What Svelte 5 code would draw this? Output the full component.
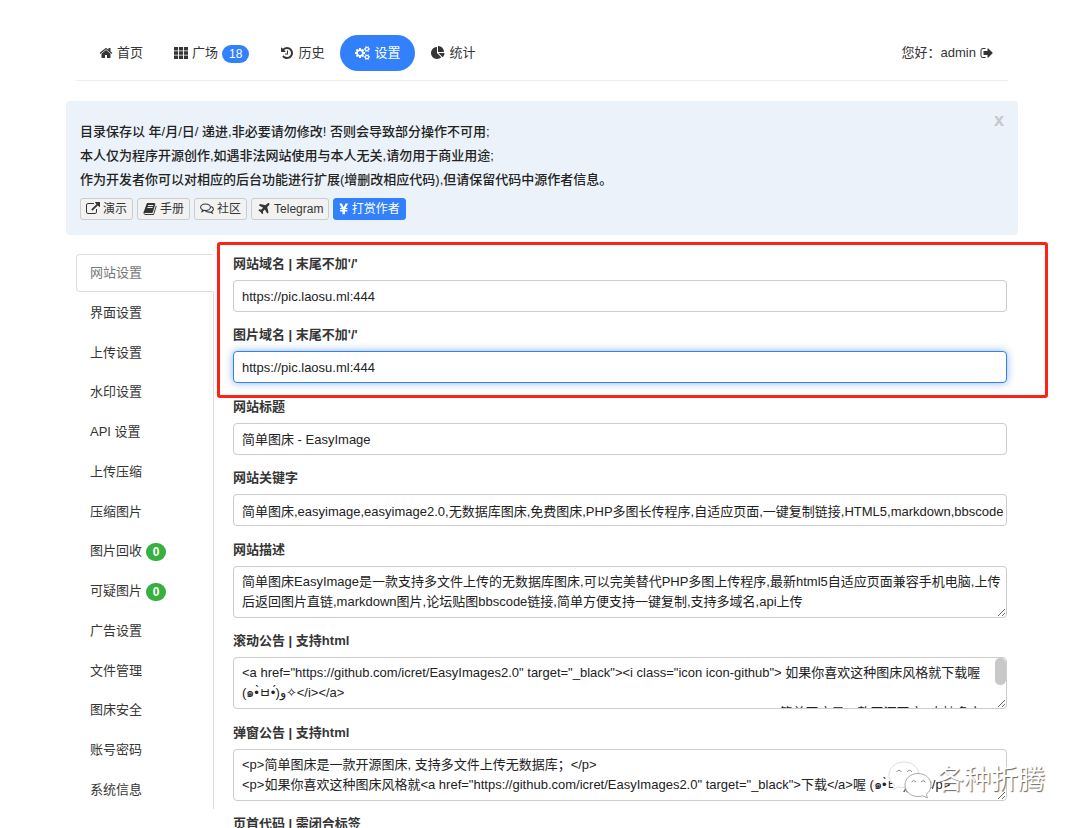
<script>
  const icons = {
    home: { w: 1792, d: 'M1472 992v480q0 26-19 45t-45 19h-384v-384h-256v384h-384q-26 0-45-19t-19-45v-480q0-1 .5-3t.5-3l575-474 575 474q1 2 1 6zm223-69l-62 74q-8 9-21 11h-3q-13 0-21-7l-692-577-692 577q-12 8-24 7-13-2-21-11l-62-74q-8-10-7-23.5t11-21.5l719-599q32-26 76-26t76 26l244 204v-195q0-14 9-23t23-9h192q14 0 23 9t9 23v408l219 182q10 8 11 21.5t-7 23.5z' },
    grid: { w: 1792, d: 'M0 140h520v430H0zM636 140h520v430H636zM1272 140h520v430h-520zM0 680h520v430H0zM636 680h520v430H636zM1272 680h520v430h-520zM0 1220h520v430H0zM636 1220h520v430H636zM1272 1220h520v430h-520z' },
    history: { w: 1792, d: 'M1664 896q0 156-61 298t-164 245-245 164-298 61q-172 0-327-72.5t-264-204.5q-7-10-6.5-22.5t8.5-20.5l137-138q10-9 25-9 16 2 23 12 73 95 179 147t225 52q104 0 198.5-40.5t163.5-109.5 109.5-163.5 40.5-198.5-40.5-198.5-109.5-163.5-163.5-109.5-198.5-40.5q-98 0-188 35.5t-160 101.5l137 138q31 30 14 69-17 40-59 40h-448q-26 0-45-19t-19-45v-448q0-42 40-59 39-17 69 14l130 129q107-101 244.5-156.5t284.5-55.5q156 0 298 61t245 164 164 245 61 298zm-640-288v448q0 14-9 23t-23 9h-320q-14 0-23-9t-9-23v-64q0-14 9-23t23-9h224v-352q0-14 9-23t23-9h64q14 0 23 9t9 23z' },
    cogs: { w: 1920, d: 'M896 896q0-106-75-181t-181-75-181 75-75 181 75 181 181 75 181-75 75-181zm768 512q0-52-38-90t-90-38-90 38-38 90q0 53 37.5 90.5t90.5 37.5 90.5-37.5 37.5-90.5zm0-1024q0-52-38-90t-90-38-90 38-38 90q0 53 37.5 90.5t90.5 37.5 90.5-37.5 37.5-90.5zm-384 421v185q0 10-7 19.5t-16 10.5l-155 24q-11 35-32 76 34 48 90 115 7 11 7 20 0 12-7 19-23 30-82.5 89.5t-78.5 59.5q-11 0-21-7l-115-90q-37 19-77 31-11 108-23 155-7 24-30 24h-186q-11 0-20-7.5t-10-17.5l-23-153q-34-10-75-31l-118 89q-7 7-20 7-11 0-21-8-144-133-144-160 0-9 7-19 10-14 41-53t47-61q-23-44-35-82l-152-24q-10-1-17-9.5t-7-19.5v-185q0-10 7-19.5t16-10.5l155-24q11-35 32-76-34-48-90-115-7-11-7-20 0-12 7-20 22-30 82-89t79-59q11 0 21 7l115 90q34-18 77-32 11-108 23-154 7-24 30-24h186q11 0 20 7.5t10 17.5l23 153q34 10 75 31l118-89q8-7 20-7 11 0 21 8 144 133 144 160 0 8-7 19-12 16-42 54t-45 60q23 48 34 82l152 23q10 2 17 10.5t7 19.5zm640 533v140q0 16-149 31-12 27-30 52 51 113 51 138 0 4-4 7-122 71-124 71-8 0-46-47t-52-68q-20 2-30 2t-30-2q-14 21-52 68t-46 47q-2 0-124-71-4-3-4-7 0-25 51-138-18-25-30-52-149-15-149-31v-140q0-16 149-31 13-29 30-52-51-113-51-138 0-4 4-7 4-2 35-20t59-34 30-16q8 0 46 46.5t52 67.5q20-2 30-2t30 2q51-71 92-112l6-2q4 0 124 70 4 3 4 7 0 25-51 138 17 23 30 52 149 15 149 31zm0-1024v140q0 16-149 31-12 27-30 52 51 113 51 138 0 4-4 7-122 71-124 71-8 0-46-47t-52-68q-20 2-30 2t-30-2q-14 21-52 68t-46 47q-2 0-124-71-4-3-4-7 0-25 51-138-18-25-30-52-149-15-149-31v-140q0-16 149-31 13-29 30-52-51-113-51-138 0-4 4-7 4-2 35-20t59-34 30-16q8 0 46 46.5t52 67.5q20-2 30-2t30 2q51-71 92-112l6-2q4 0 124 70 4 3 4 7 0 25-51 138 17 23 30 52 149 15 149 31z' },
    pie: { w: 1792, d: 'M768 890l546 546q-106 108-247.5 168t-298.5 60q-209 0-385.5-103t-279.5-279.5-103-385.5 103-385.5 279.5-279.5 385.5-103v762zm187 6h773q0 157-60 298.5t-168 247.5zm709-128h-768v-768q209 0 385.5 103t279.5 279.5 103 385.5z' },
    signout: { w: 1664, d: 'M704 1440q0 4 1 20t.5 26.5-3 23.5-10 19.5-20.5 6.5h-320q-119 0-203.5-84.5t-84.5-203.5v-704q0-119 84.5-203.5t203.5-84.5h320q13 0 22.5 9.5t9.5 22.5q0 4 1 20t.5 26.5-3 23.5-10 19.5-20.5 6.5h-320q-66 0-113 47t-47 113v704q0 66 47 113t113 47h312l11.5 1 11.5 3 8 5.5 7 9 2 13.5zm928-544q0 26-19 45l-544 544q-19 19-45 19t-45-19-19-45v-288h-448q-26 0-45-19t-19-45v-384q0-26 19-45t45-19h448v-288q0-26 19-45t45-19 45 19l544 544q19 19 19 45z' },
    external: { w: 1792, d: 'M1408 928v320q0 119-84.5 203.5t-203.5 84.5h-832q-119 0-203.5-84.5t-84.5-203.5v-832q0-119 84.5-203.5t203.5-84.5h704q14 0 23 9t9 23v64q0 14-9 23t-23 9h-704q-66 0-113 47t-47 113v832q0 66 47 113t113 47h832q66 0 113-47t47-113v-320q0-14 9-23t23-9h64q14 0 23 9t9 23zm384-864v512q0 26-19 45t-45 19-45-19l-176-176-652 652q-10 10-23 10t-23-10l-114-114q-10-10-10-23t10-23l652-652-176-176q-19-19-19-45t19-45 45-19h512q26 0 45 19t19 45z' },
    book: { w: 1792, d: 'M1703 478q40 57 18 129l-275 906q-19 64-76.5 107.5t-122.5 43.5h-923q-77 0-148.5-53.5t-99.5-131.5q-24-67-2-127 0-4 3-27t4-37q1-8-3-21.5t-3-19.5q2-11 8-21t16.5-23.5 16.5-23.5q23-38 45-91.5t30-91.5q3-10 .5-30t-.5-28q3-11 17-28t17-23q21-36 42-92t25-90q1-9-2.5-32t.5-28q4-13 22-30.5t22-22.5q19-26 42.5-84.5t27.5-96.5q1-8-3-25.5t-2-26.5q2-8 9-18t18-23 17-21q8-12 16.5-30.5t15-35 16-36 19.5-32 26.5-23.5 36-11.5 47.5 5.5l-1 3q38-9 51-9h761q74 0 114 56t18 130l-274 906q-36 119-71.5 153.5t-128.5 34.5h-869q-27 0-38 15-11 16-1 43 24 70 144 70h923q29 0 56-15.5t35-41.5l300-987q7-22 5-57 38 15 59 43zm-1064 2q-4 13 2 22.5t20 9.5h608q13 0 25.5-9.5t16.5-22.5l21-64q4-13-2-22.5t-20-9.5h-608q-13 0-25.5 9.5t-16.5 22.5zm-83 256q-4 13 2 22.5t20 9.5h608q13 0 25.5-9.5t16.5-22.5l21-64q4-13-2-22.5t-20-9.5h-608q-13 0-25.5 9.5t-16.5 22.5z' },
    comments: { w: 1792, line: true, d: 'M704 250c-350 0-630 185-630 425 0 150 100 275 260 350l-70 190 250-140c60 15 120 20 190 20 350 0 630-185 630-420S1054 250 704 250zM1420 590c180 70 298 190 298 330 0 130-90 235-230 310l90 190-270-140c-50 10-110 15-170 15-190 0-350-60-450-150' },
    plane: { w: 1792, d: 'M1568 160q44 52 12 148t-108 172l-161 161 160 696q5 19-12 33l-128 96q-7 6-19 6-4 0-7-1-15-3-21-16l-279-508-259 259 53 194q5 17-8 31l-96 96q-9 9-23 9h-2q-15-2-24-13l-189-252-252-189q-11-7-13-23-1-13 9-25l96-97q9-9 23-9 6 0 8 1l194 53 259-259-508-279q-14-8-17-24-2-16 9-27l128-128q14-13 30-8l665 159 160-160q76-76 172-108t148 12z' },
    yen: { w: 1200, d: 'M40 200h320l240 460 240-460h320L860 760h210v170H760v100h310v170H760v360H440v-360H130v-170h310V930H130V760h210z' }
  };

  const nav = [
    { icon: 'home', text: '首页' },
    { icon: 'grid', text: '广场', badge: '18' },
    { icon: 'history', text: '历史' },
    { icon: 'cogs', text: '设置', active: true },
    { icon: 'pie', text: '统计' }
  ];

  const notes = [
    '目录保存以 年/月/日/ 递进,非必要请勿修改! 否则会导致部分操作不可用;',
    '本人仅为程序开源创作,如遇非法网站使用与本人无关,请勿用于商业用途;',
    '作为开发者你可以对相应的后台功能进行扩展(增删改相应代码),但请保留代码中源作者信息。'
  ];

  const links = [
    { icon: 'external', text: '演示' },
    { icon: 'book', text: '手册' },
    { icon: 'comments', text: '社区' },
    { icon: 'plane', text: 'Telegram' },
    { icon: 'yen', text: '打赏作者', primary: true }
  ];

  const tabs = [
    { text: '网站设置', active: true },
    { text: '界面设置' },
    { text: '上传设置' },
    { text: '水印设置' },
    { text: 'API 设置' },
    { text: '上传压缩' },
    { text: '压缩图片' },
    { text: '图片回收', badge: '0' },
    { text: '可疑图片', badge: '0' },
    { text: '广告设置' },
    { text: '文件管理' },
    { text: '图床安全' },
    { text: '账号密码' },
    { text: '系统信息' }
  ];

  const fields = [
    { id: 'domain', label: "网站域名 | 末尾不加'/'", value: 'https://pic.laosu.ml:444' },
    { id: 'imgurl', label: "图片域名 | 末尾不加'/'", value: 'https://pic.laosu.ml:444', current: true },
    { id: 'title', label: '网站标题', value: '简单图床 - EasyImage' },
    { id: 'keywords', label: '网站关键字', value: '简单图床,easyimage,easyimage2.0,无数据库图床,免费图床,PHP多图长传程序,自适应页面,一键复制链接,HTML5,markdown,bbscode' },
    { id: 'description', label: '网站描述', area: true, value: '简单图床EasyImage是一款支持多文件上传的无数据库图床,可以完美替代PHP多图上传程序,最新html5自适应页面兼容手机电脑,上传后返回图片直链,markdown图片,论坛贴图bbscode链接,简单方便支持一键复制,支持多域名,api上传' },
    { id: 'tips', label: '滚动公告 | 支持html', area: true, scroll: true, value: '<a href="https://github.com/icret/EasyImages2.0" target="_black"><i class="icon icon-github"> 如果你喜欢这种图床风格就下载喔 (๑•̀ㅂ•́)و✧</i></a>\n<a href="https://github.com/icret/EasyImages2.0" target="_black"><i class="icon icon-heart"> 简单图床是一款开源图床, 支持多文件上传</i></a>' },
    { id: 'notice', label: '弹窗公告 | 支持html', area: true, value: '<p>简单图床是一款开源图床, 支持多文件上传无数据库；</p>\n<p>如果你喜欢这种图床风格就<a href="https://github.com/icret/EasyImages2.0" target="_black">下载</a>喔 (๑•̀ㅂ•́)و✧</p>' }
  ];
</script>

{#snippet glyph(name)}
  <svg class="icon" class:line={icons[name].line} viewBox="0 0 {icons[name].w} 1792" aria-hidden="true"><path d={icons[name].d} /></svg>
{/snippet}

<div class="page">
  <header>
    <nav>
      {#each nav as item}
        <a href="#{item.icon}" class="nav-link" class:active={item.active}>
          {@render glyph(item.icon)}<span>{item.text}</span>
          {#if item.badge}<span class="badge blue">{item.badge}</span>{/if}
        </a>
      {/each}
    </nav>
    <a href="#logout" class="nav-link"><span>您好：admin</span>{@render glyph('signout')}</a>
  </header>

  <section class="alert">
    <div>
      {#each notes as note}<p>{note}</p>{/each}
      <div class="links">
        {#each links as link}
          <a href="#{link.icon}" class="btn" class:primary={link.primary}>{@render glyph(link.icon)}<span>{link.text}</span></a>
        {/each}
      </div>
    </div>
    <button type="button" class="close">x</button>
  </section>

  <main>
    <ul class="tabs">
      {#each tabs as tab, i}
        <li>
          <a href="#tab{i}" class:active={tab.active}>{tab.text}{#if tab.badge}<span class="badge green">{tab.badge}</span>{/if}</a>
        </li>
      {/each}
    </ul>

    <form>
      {#each fields as f}
        <div class="group">
          <label for={f.id}>{f.label}</label>
          {#if f.area}
            <div class="area" class:scroll={f.scroll}>
              <textarea id={f.id} spellcheck="false" value={f.value}></textarea>
              {#if f.scroll}<span class="thumb"></span>{/if}
            </div>
          {:else}
            <input id={f.id} type="text" class:current={f.current} value={f.value} />
          {/if}
        </div>
      {/each}
      <div class="group"><span class="caption">页首代码 | 需闭合标签</span></div>
      <div class="highlight"></div>
    </form>
  </main>

  <div class="watermark">
    <svg viewBox="0 0 44 38" aria-hidden="true">
      <path class="back" d="M16 1C7.500 1 1 6.800 1 14c0 4 2 7.500 5.500 10L5 28.500l5.500-2.700c1.800.5 3.600.7 5.500.7 8.500 0 15-5.300 15-12.500S24.500 1 16 1z" />
      <path d="M30 12.500c-7.500 0-13 5-13 11.500S22.500 35.500 30 35.500c1.700 0 3.300-.2 4.800-.7L39.500 37l-1.200-3.800c3-2.200 4.700-5.400 4.700-9.200 0-6.500-5.500-11.500-13-11.500z" />
      <path class="eye" d="M8.500 11q2.500-3.500 5 0M19 11q2.500-3.500 5 0M23.500 21q2-3 4.500 0M33 21q2-3 4.500 0" />
    </svg>
    <span>各种折腾</span>
  </div>
</div>

<style>
  :global(body) {
    margin: 0;
    background: #fff;
  }
  .page {
    position: relative;
    box-sizing: border-box;
    height: 100vh;
    overflow: hidden;
    padding: 26px 62px 0 66px;
    font: 13px/20px "Liberation Sans", "Noto Sans CJK SC", sans-serif;
    color: #353535;
  }
  a {
    color: inherit;
    text-decoration: none;
  }
  .icon {
    height: 14px;
    fill: currentColor;
    flex: none;
  }
  .icon.line {
    fill: none;
    stroke: currentColor;
    stroke-width: 140;
  }
  header {
    display: flex;
    justify-content: space-between;
    align-items: center;
    margin: 0 10px;
    padding: 9px 0;
    border-bottom: 1px solid #eee;
  }
  nav {
    display: flex;
    gap: 1px;
    padding-left: 8px;
  }
  .nav-link {
    display: flex;
    align-items: center;
    gap: 4px;
    padding: 8px 15px;
    border-radius: 18px;
  }
  .nav-link.active {
    background: #3280fc;
    color: #fff;
  }
  .badge {
    display: inline-block;
    margin-top: 2px;
    color: #fff;
    font-size: 12px;
    line-height: 18px;
    border-radius: 9px;
    text-align: center;
  }
  .blue {
    background: #3280fc;
    padding: 0 7px;
  }
  .green {
    background: #38b03f;
    width: 20px;
    margin-left: 4px;
    font-weight: bold;
  }
  .alert {
    display: flex;
    justify-content: space-between;
    align-items: flex-start;
    margin-top: 20px;
    padding: 19px 14px 15px;
    background: #ebf2f9;
    border-radius: 4px;
  }
  .alert p {
    margin: 0;
    font-weight: 500;
    line-height: 24px;
    color: #222;
  }
  .links {
    display: flex;
    gap: 4px;
    margin-top: 6px;
  }
  .btn {
    display: flex;
    align-items: center;
    gap: 3px;
    padding: 0 5px;
    border: 1px solid #ccc;
    border-radius: 3px;
    background: #f2f2f2;
    color: #353535;
    font-size: 12px;
  }
  .btn.primary {
    background: #3280fc;
    border-color: #3280fc;
    color: #fff;
  }
  .close {
    border: 0;
    padding: 0;
    background: none;
    font: bold 18px/20px "Liberation Sans", sans-serif;
    color: #c4c8cd;
    margin-top: -10px;
  }
  main {
    display: grid;
    grid-template-columns: 138px 1fr;
    align-items: start;
    gap: 19px;
    margin: 19px 11px 0 10px;
  }
  .tabs {
    display: flex;
    flex-direction: column;
    justify-content: space-between;
    height: 555px;
    box-sizing: border-box;
    margin: 0;
    padding: 0;
    list-style: none;
    border-right: 1px solid #ddd;
  }
  .tabs a {
    display: flex;
    align-items: center;
    height: 36px;
    padding: 0 13px;
    border: 1px solid transparent;
  }
  .tabs a.active {
    margin-right: -1px;
    border-color: #ddd;
    border-right-color: #fff;
    border-radius: 4px 0 0 4px;
    background: #fff;
    color: #777;
  }
  form {
    position: relative;
    display: flex;
    flex-direction: column;
    justify-content: space-between;
    min-width: 0;
    min-height: 580px;
  }
  .group {
    display: flex;
    flex-direction: column;
    gap: 6px;
  }
  label,
  .caption {
    font-weight: bold;
  }
  input,
  textarea {
    display: block;
    box-sizing: border-box;
    width: 100%;
    margin: 0;
    border: 1px solid #ccc;
    border-radius: 4px;
    background: #fff;
    color: #222;
    font: inherit;
    outline: 0;
  }
  input {
    height: 32px;
    padding: 0 2px 0 8px;
  }
  textarea {
    height: 52px;
    padding: 5px 2px 5px 8px;
    resize: vertical;
    overflow: hidden;
  }
  .area {
    position: relative;
  }
  .scroll textarea {
    padding-right: 20px;
  }
  .thumb {
    position: absolute;
    top: 1px;
    right: 1px;
    width: 11px;
    height: 27px;
    border-radius: 5px;
    background: #c8c8c8;
  }
  input.current {
    border-color: #3280fc;
    box-shadow: 0 0 8px #8db8fb;
  }
  .highlight {
    position: absolute;
    box-sizing: border-box;
    top: -12px;
    left: -16px;
    right: -41px;
    height: 156px;
    border: 3px solid #fd2314;
    border-radius: 3px;
    pointer-events: none;
  }
  .watermark {
    position: absolute;
    right: 35px;
    bottom: 28px;
    display: flex;
    align-items: center;
    gap: 5px;
    font-size: 27px;
    line-height: 40px;
    color: #fff;
    text-shadow: 1px 1px 1px #666;
  }
  .watermark svg {
    width: 44px;
    height: 38px;
    fill: #fff;
    stroke: #aaa;
    stroke-width: 1;
  }
  .watermark .back {
    stroke: #ddd;
  }
  .watermark .eye {
    fill: none;
    stroke: #888;
  }
</style>
